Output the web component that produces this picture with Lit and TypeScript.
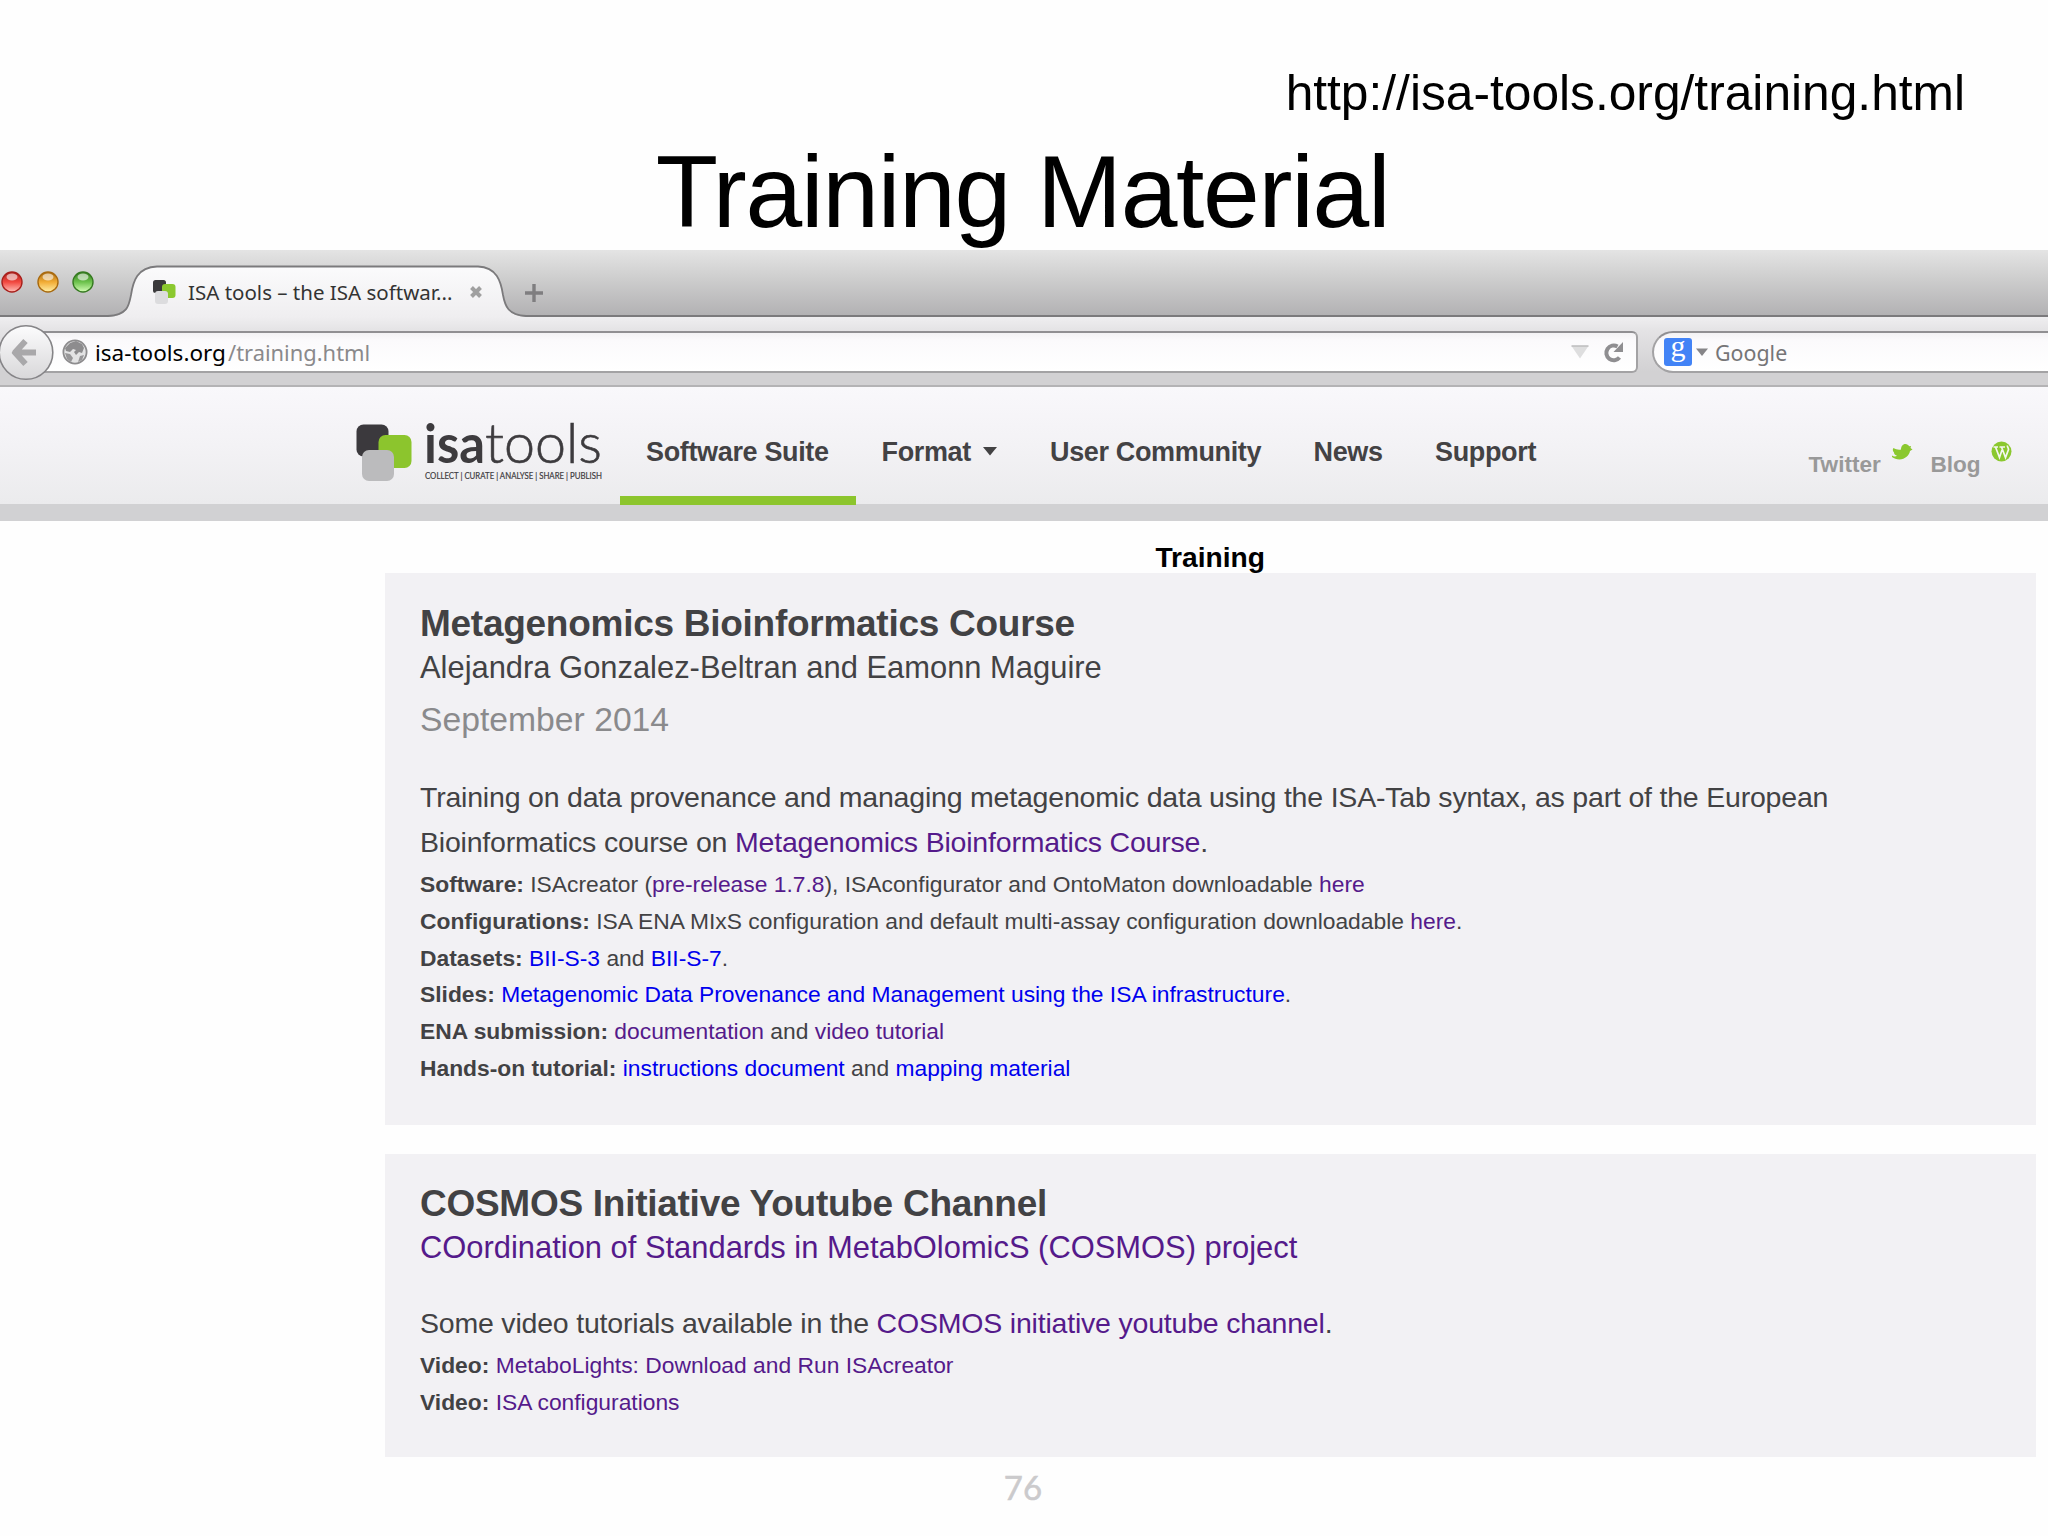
import { LitElement, html, svg, css } from "lit";

type Part = string | { text: string; kind: "visited" | "fresh" };
type Detail = { label: string; parts: Part[] };

const visited = (text: string): Part => ({ text, kind: "visited" });
const fresh = (text: string): Part => ({ text, kind: "fresh" });

const renderParts = (parts: Part[]) =>
  parts.map((p) => (typeof p === "string" ? p : html`<a class=${p.kind}>${p.text}</a>`));

const linkStyles = css`
  .visited { color: #551a8b; }
  .fresh { color: #0000ee; }
`;

class BrowserChrome extends LitElement {
  static styles = css`
    :host { display: block; font-family: "Noto Sans", "Open Sans", sans-serif; }
    .tabs {
      position: relative;
      height: 67px;
      background: linear-gradient(#e4e4e4, #cfcfcf 40%, #b1b0b2);
    }
    .tabshape { position: absolute; left: 0; top: 0; display: block; }
    .tabrow { position: relative; display: flex; height: 67px; align-items: center; }
    .lights { display: flex; gap: 13.5px; padding: 0 0 4px 1px; }
    .favicon { margin: 18px 0 0 59px; }
    .tabtitle { margin: 17px 0 0 12px; width: 268px; font-size: 20.5px; line-height: 28px; color: #333; white-space: pre; }
    .close { margin: 16px 0 0 13px; }
    .plus { margin: 18px 0 0 42px; }
    .toolbar {
      box-sizing: border-box;
      height: 70px;
      display: flex;
      align-items: flex-start;
      padding-top: 14px;
      border-bottom: 2px solid #b4b3b5;
      background: linear-gradient(#efeef0, #e4e3e5 20%, #d2d1d3 80%, #d2d1d3);
    }
    .back { position: relative; z-index: 1; margin: -7.5px 0 0 -2px; flex: none; }
    .address, .search {
      box-sizing: border-box;
      height: 42px;
      display: flex;
      align-items: center;
      border: 2px solid #a3a2a4;
      border-top-color: #908f92;
      background: linear-gradient(#f3f2f4, #fbfafc 20%, #fff);
      font-size: 22px;
      line-height: 30px;
    }
    .address { width: 1604px; margin-left: -20px; border-radius: 0 6px 6px 0; padding-left: 28px; border-left: 0; }
    .globe { margin-bottom: 1px; }
    .host { color: #000; margin: 1px 0 0 7px; width: 133px; font-size: 22.5px; }
    .path { color: #8a898b; flex: 1; margin-top: 1px; font-size: 21.9px; }
    .drop { margin-right: 14px; }
    .reload { margin-right: 12.5px; }
    .search { flex: 1; margin-left: 14px; border-right: 0; border-radius: 21px 0 0 21px; padding-left: 10px; color: #767577; font-size: 21.4px; }
    .search span { margin-top: 1px; }
    .g { margin-right: 4px; }
    .caret { margin-right: 7px; }
    svg { display: block; flex: none; }
  `;

  light(id: string, dark: string, mid: string, pale: string) {
    return html`<svg width="22" height="22" viewBox="0 0 22 22">
      <defs>
        <linearGradient id=${id} x1="0" y1="0" x2="0" y2="1">
          <stop offset="0" stop-color=${dark} /><stop offset=".5" stop-color=${mid} /><stop offset="1" stop-color=${pale} />
        </linearGradient>
      </defs>
      <circle cx="11" cy="11" r="10" fill="url(#${id})" stroke=${dark} stroke-width="1.4" />
      <ellipse cx="11" cy="6" rx="5.5" ry="3.4" fill="#fff" opacity=".6" />
    </svg>`;
  }

  render() {
    return html`
      <div class="tabs">
        <svg class="tabshape" width="2048" height="67" viewBox="0 0 2048 67">
          <defs>
            <linearGradient id="tab" x1="0" y1="0" x2="0" y2="1">
              <stop offset="0" stop-color="#fbfbfc" /><stop offset="1" stop-color="#efeef0" />
            </linearGradient>
          </defs>
          <path d="M108 67C128 66 129 56 131 45C133 32 137 17 157 16.5H478C497 17 501 32 503 45C505 56 508 66 526 67Z" fill="url(#tab)" />
          <path d="M0 66H108C128 65 129 55 131 45C133 32 137 17 157 16.5H478C497 17 501 32 503 45C505 56 508 65 526 66H2048" fill="none" stroke="#7b7a7c" stroke-width="1.8" />
        </svg>
        <div class="tabrow">
          <div class="lights">
            ${this.light("r", "#a81f1b", "#f2483f", "#ffc0b8")}
            ${this.light("y", "#a8690f", "#f2ac35", "#fff0a8")}
            ${this.light("n", "#357a20", "#6cc24c", "#d6ffb8")}
          </div>
          <svg class="favicon" width="23" height="25" viewBox="0 0 23 25">
            <rect x="0" y="0" width="13" height="13" rx="2.5" fill="#3a393b" />
            <rect x="9" y="4" width="13.5" height="14" rx="3" fill="#8bc82f" />
            <rect x="2" y="11" width="13" height="13" rx="3" fill="#dcdcde" />
          </svg>
          <div class="tabtitle">ISA tools – the ISA softwar...</div>
          <svg class="close" width="14" height="14" viewBox="0 0 14 14">
            <path d="M2.5 2.5L11.5 11.5M11.5 2.5L2.5 11.5" stroke="#a0a0a0" stroke-width="4" />
          </svg>
          <svg class="plus" width="18" height="18" viewBox="0 0 18 18">
            <path d="M9 0V18M0 9H18" stroke="#7f7e80" stroke-width="3.4" />
          </svg>
        </div>
      </div>
      <div class="toolbar">
        <svg class="back" width="56" height="58" viewBox="0 0 56 58">
          <defs>
            <linearGradient id="bk" x1="0" y1="0" x2="0" y2="1">
              <stop offset="0" stop-color="#fcfcfd" /><stop offset="1" stop-color="#d8d7d9" />
            </linearGradient>
          </defs>
          <circle cx="28" cy="28.5" r="26.8" fill="url(#bk)" stroke="#858487" stroke-width="1.6" />
          <path d="M27.5 17L17 28.5L27.5 40M17 28.5H38" fill="none" stroke="#a9a8aa" stroke-width="6" stroke-linejoin="round" />
        </svg>
        <div class="address">
          <svg class="globe" width="26" height="26" viewBox="0 0 26 26">
            <circle cx="13" cy="13" r="11.6" fill="#e3e3e4" stroke="#8d8c8e" stroke-width="1.8" />
            <path d="M8 4L14 2L20 5L22 9L20 14L17 13L14 16L12 13L14 11L11 10L8 13L4 12L3 9Z" fill="#8d8c8e" />
            <path d="M3 14L8 15L11 19L9 23L5 20ZM18 17L22 16L20 21L16 23Z" fill="#979698" />
          </svg>
          <span class="host">isa-tools.org</span><span class="path">/training.html</span>
          <svg class="drop" width="18" height="14" viewBox="0 0 18 14"><path d="M.5 1H17.5L9 13.5Z" fill="#dededf" /><path d="M.5 1H17.5" stroke="#bdbcbe" stroke-width="1.5" /></svg>
          <svg class="reload" width="21" height="21" viewBox="0 0 21 21">
            <path d="M14.5 4.5A7.4 7.4 0 1 0 16.5 15.5" fill="none" stroke="#8f8e91" stroke-width="4" />
            <path d="M20 0V10H10.5Z" fill="#8f8e91" />
          </svg>
        </div>
        <div class="search">
          <svg class="g" width="28" height="28" viewBox="0 0 28 28">
            <rect width="28" height="28" rx="3" fill="#4283f6" />
            <text x="14" y="18" text-anchor="middle" font-family="Liberation Serif, serif" font-size="30" fill="#fff">g</text>
          </svg>
          <svg class="caret" width="12" height="8" viewBox="0 0 12 8"><path d="M0 .5H12L6 8Z" fill="#868588" /></svg>
          <span>Google</span>
        </div>
      </div>
    `;
  }
}
customElements.define("browser-chrome", BrowserChrome);

class SiteHeader extends LitElement {
  static styles = css`
    :host {
      box-sizing: border-box;
      display: flex;
      height: 134px;
      border-bottom: 17.5px solid #d1d1d3;
      background: linear-gradient(#f9f8fb, #f3f2f5 50%, #ebebed);
      font-family: "Liberation Sans", Arial, sans-serif;
      font-weight: bold;
    }
    .logo { margin: 31px 0 0 354px; display: block; flex: none; }
    nav { display: grid; grid-template-columns: 235.5px 168.5px 263.5px 121.5px 160.5px; margin-left: 10px; flex: none; }
    .item { display: flex; align-items: center; height: 31px; margin-top: 50px; padding-left: 26px; font-size: 27px; line-height: 31px; letter-spacing: -0.35px; color: #434244; white-space: pre; }
    .item.active { height: 59px; border-bottom: 9px solid #8cc52d; align-items: flex-start; position: relative; }
    .caret { margin: 0 0 2px 12px; }
    .social { margin-left: 239px; display: flex; }
    .social span { margin-top: 65px; font-size: 22.6px; line-height: 26px; color: #999; }
    .bird { margin: 56px 0 0 10px; }
    .blog { margin-left: 17.5px; }
    .wp { margin: 54px 0 0 10px; }
  `;

  render() {
    return html`
      <svg class="logo" width="256" height="70" viewBox="354 418 256 70">
        <rect x="356.5" y="424.5" width="32" height="32" rx="7" fill="#3b393d" />
        <rect x="378.5" y="435" width="33" height="33" rx="7" fill="#8cc52d" />
        <rect x="362" y="450" width="32" height="31" rx="7" fill="#bbbbbd" />
        ${svg`
        <text x="424" y="463" font-family="Lato, sans-serif" font-weight="700" font-size="54" textLength="61" lengthAdjust="spacingAndGlyphs" fill="#3d3b3e">isa</text>
        <text x="485" y="463" font-family="Lato, sans-serif" font-weight="300" font-size="55.5" textLength="117" lengthAdjust="spacingAndGlyphs" fill="#3d3b3e" stroke="#3d3b3e" stroke-width=".6">tools</text>
        <text x="425" y="478.8" font-family="Lato, sans-serif" font-weight="400" font-size="9.8" textLength="177" lengthAdjust="spacingAndGlyphs" fill="#3d3b3e" stroke="#3d3b3e" stroke-width=".2">COLLECT | CURATE | ANALYSE | SHARE | PUBLISH</text>`}
      </svg>
      <nav>
        <div class="item active">Software Suite</div>
        <div class="item">Format<svg class="caret" width="14" height="9" viewBox="0 0 14 9"><path d="M0 0H14L7 8.5Z" fill="#434244" /></svg></div>
        <div class="item">User Community</div>
        <div class="item">News</div>
        <div class="item">Support</div>
      </nav>
      <div class="social">
        <span>Twitter</span>
        <svg class="bird" width="22" height="18" viewBox="0 0 22 18">
          <path d="M1 12.5C3 14 5 13.5 6 12.8C3.5 12 3 10.5 3 9.5C1.5 8 1.5 6 2.5 5C5 6.5 7.5 7 10 6.5C10 3.5 11.5 1 14.5 1C16 1 17.5 2 18 3.2L20 3L19.5 5L21.5 6.5L19 8C18.5 12 14 16.5 8.5 16.5C5.5 16.5 3 15.5 1 14Z" fill="#8bc82f" />
        </svg>
        <span class="blog">Blog</span>
        <svg class="wp" width="21" height="21" viewBox="0 0 21 21">
          <circle cx="10.5" cy="10.5" r="10" fill="#8bc82f" />
          <path d="M2.5 6H7M4.500 6L8.500 16.500L11 9M8.500 6H14M10.500 6L14.500 16.500L17.500 8.500C17.500 7 16 6 16.500 4.500" fill="none" stroke="#f4f6f0" stroke-width="1.7" />
        </svg>
      </div>
    `;
  }
}
customElements.define("site-header", SiteHeader);

class CourseCard extends LitElement {
  static properties = {
    heading: {}, subtitle: { attribute: false }, date: {}, body: { attribute: false }, details: { attribute: false },
  };
  declare heading: string;
  declare subtitle: Part[];
  declare date: string;
  declare body: Part[][];
  declare details: Detail[];

  static styles = [linkStyles, css`
    :host { display: block; box-sizing: border-box; background: #f2f1f4; padding: 29px 0 0 35px; color: #424244; }
    .heading { font-weight: bold; font-size: 37px; line-height: 42px; letter-spacing: -0.27px; }
    .subtitle { font-size: 30.9px; line-height: 45.5px; }
    .date { font-size: 33.7px; line-height: 57px; color: #8a8a8c; }
    .body { font-size: 28.5px; line-height: 45px; letter-spacing: -0.2px; margin: 27.6px 0 0.6px; }
    .subtitle + .body { margin-top: 31.2px; }
    .line, .detail { white-space: nowrap; }
    .detail { font-size: 22.82px; line-height: 36.9px; }
  `];

  render() {
    return html`
      <div class="heading">${this.heading}</div>
      <div class="subtitle">${renderParts(this.subtitle)}</div>
      ${this.date ? html`<div class="date">${this.date}</div>` : null}
      <div class="body">${this.body.map((l) => html`<div class="line">${renderParts(l)}</div>`)}</div>
      ${this.details.map((d) => html`<div class="detail"><b>${d.label}</b> ${renderParts(d.parts)}</div>`)}
    `;
  }
}
customElements.define("course-card", CourseCard);

class AppRoot extends LitElement {
  static styles = css`
    :host {
      display: flex;
      flex-direction: column;
      width: 2048px;
      height: 1536px;
      overflow: hidden;
      background: #fefefe;
      font-family: "Liberation Sans", Arial, sans-serif;
    }
    .top { box-sizing: border-box; height: 250px; padding-top: 65px; }
    .url { padding-right: 83px; text-align: right; font-size: 49.7px; line-height: 56px; }
    .title { text-align: center; font-size: 102px; line-height: 114px; letter-spacing: -1.3px; margin-top: 14px; padding-right: 3px; }
    .content { display: flex; flex-direction: column; width: 1650.5px; margin-left: 385px; }
    .label { height: 52px; box-sizing: border-box; padding-top: 20px; text-align: center; font-weight: bold; font-size: 28.2px; line-height: 33px; color: #000; }
    .first { height: 551.5px; padding-top: 30px; }
    .second { height: 303px; margin-top: 29px; }
    .page { text-align: center; font: 400 33px/60px Lato, sans-serif; color: #cbcacc; -webkit-text-stroke: 0.5px #cbcacc; padding-right: 2px; }
  `;

  render() {
    return html`
      <div class="top">
        <div class="url">http://isa-tools.org/training.html</div>
        <div class="title">Training Material</div>
      </div>
      <browser-chrome></browser-chrome>
      <site-header></site-header>
      <div class="content">
        <div class="label">Training</div>
        <course-card
          class="first"
          .heading=${"Metagenomics Bioinformatics Course"}
          .subtitle=${["Alejandra Gonzalez-Beltran and Eamonn Maguire"]}
          .date=${"September 2014"}
          .body=${[
            ["Training on data provenance and managing metagenomic data using the ISA-Tab syntax, as part of the European"],
            ["Bioinformatics course on ", visited("Metagenomics Bioinformatics Course"), "."],
          ]}
          .details=${[
            { label: "Software:", parts: ["ISAcreator (", visited("pre-release 1.7.8"), "), ISAconfigurator and OntoMaton downloadable ", visited("here")] },
            { label: "Configurations:", parts: ["ISA ENA MIxS configuration and default multi-assay configuration downloadable ", visited("here"), "."] },
            { label: "Datasets:", parts: [fresh("BII-S-3"), " and ", fresh("BII-S-7"), "."] },
            { label: "Slides:", parts: [fresh("Metagenomic Data Provenance and Management using the ISA infrastructure"), "."] },
            { label: "ENA submission:", parts: [visited("documentation"), " and ", visited("video tutorial")] },
            { label: "Hands-on tutorial:", parts: [fresh("instructions document"), " and ", fresh("mapping material")] },
          ]}
        ></course-card>
        <course-card
          class="second"
          .heading=${"COSMOS Initiative Youtube Channel"}
          .subtitle=${[visited("COordination of Standards in MetabOlomicS (COSMOS) project")]}
          .body=${[["Some video tutorials available in the ", visited("COSMOS initiative youtube channel"), "."]]}
          .details=${[
            { label: "Video:", parts: [visited("MetaboLights: Download and Run ISAcreator")] },
            { label: "Video:", parts: [visited("ISA configurations")] },
          ]}
        ></course-card>
      </div>
      <div class="page">76</div>
    `;
  }
}
customElements.define("app-root", AppRoot);
